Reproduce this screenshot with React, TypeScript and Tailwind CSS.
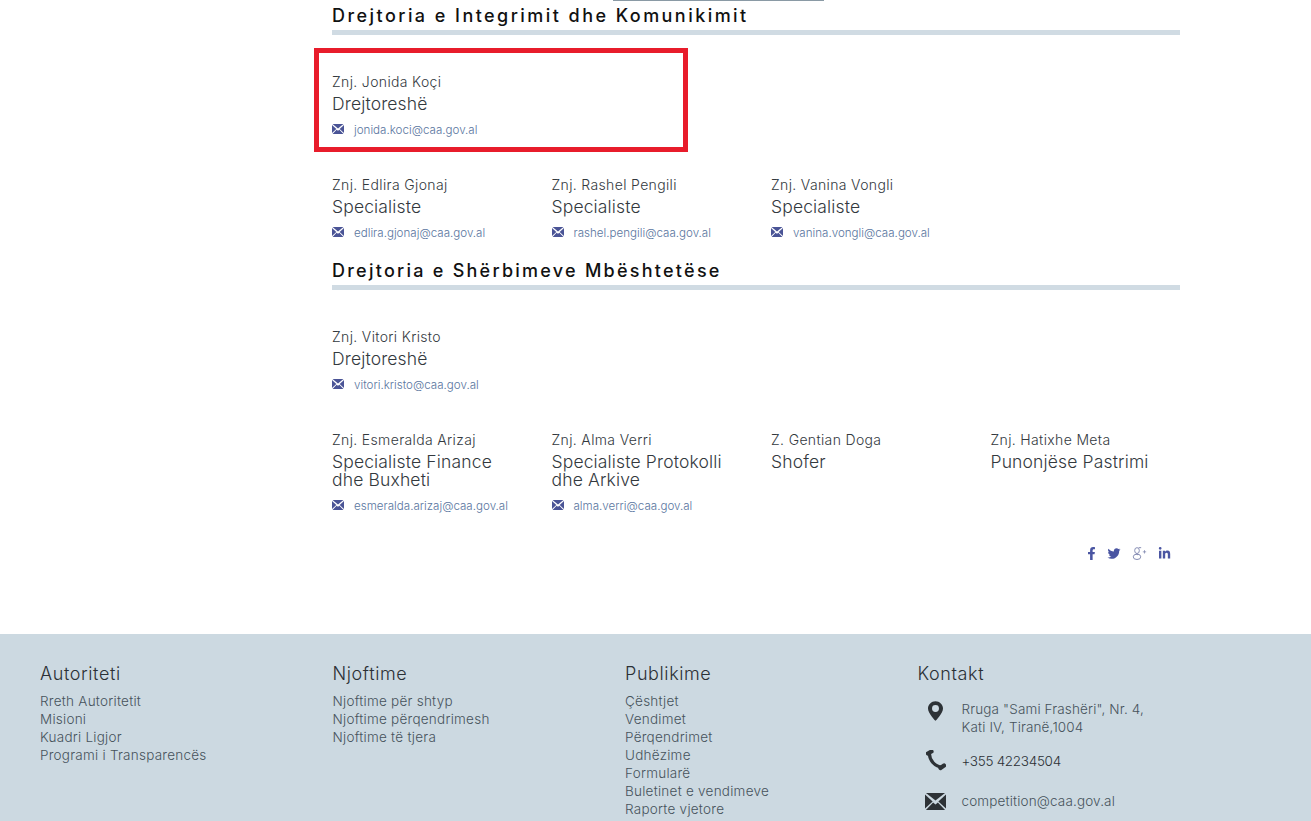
import { FaFacebookF, FaTwitter, FaLinkedinIn } from "react-icons/fa";

type Person = { name: string; role: string[]; email?: string };

function Envelope({ className }: { className: string }) {
  return (
    <svg viewBox="0 0 22 16" preserveAspectRatio="none" className={className} fill="currentColor">
      <path d="M1 0h20L11 7z" />
      <path d="M0 1.500v13L8 8z" />
      <path d="M22 1.500v13L14 8z" />
      <path d="M1 16h20L13.500 9 11 10.800 8.500 9z" />
    </svg>
  );
}

function Pin() {
  return (
    <svg viewBox="0 0 16 21" className="h-[20px] w-[15px] text-[#2d3236]" fill="currentColor">
      <path
        fillRule="evenodd"
        d="M8 0C3.600 0 0 3.500 0 7.800 0 13 8 21 8 21s8-8 8-13.200C16 3.500 12.400 0 8 0zm0 11.500a3.700 3.700 0 1 1 0-7.400 3.700 3.700 0 0 1 0 7.400z"
      />
    </svg>
  );
}

function Phone() {
  return (
    <svg viewBox="0 0 20 21" className="h-[21px] w-[20px] text-[#2d3236]" fill="none" stroke="currentColor">
      <path d="M3.500 4C3.500 10 9 17 16 17" strokeWidth="3.200" />
      <path d="M1.800 3.500L5.500 1.500" strokeWidth="4.200" strokeLinecap="round" />
      <path d="M14.500 18L18 15.500" strokeWidth="4.200" strokeLinecap="round" />
    </svg>
  );
}

function GooglePlus() {
  return (
    <svg viewBox="0 0 18 16" className="h-[15px] w-[15px] text-[#7c83ad]" fill="none" stroke="currentColor" strokeWidth="1.100">
      <ellipse cx="6" cy="4.500" rx="2.800" ry="3.500" />
      <ellipse cx="6" cy="12" rx="4.500" ry="3.200" />
      <path d="M6 8c-1.500 1 1.500 1.500 1 1.500M8 1h3" />
      <path d="M13 6h4M15 4v4" strokeWidth="0.900" />
    </svg>
  );
}

function PersonCard({ name, role, email }: Person) {
  return (
    <div>
      <p className="text-[14px] font-light leading-[20px] tracking-[0.35px] text-[#33393e]">{name}</p>
      <p className="mt-[3px] text-[17.500px] font-light leading-[18px] tracking-[0.15px] text-[#33393e]">
        {role.map((line) => (
          <span key={line} className="block">
            {line}
          </span>
        ))}
      </p>
      {email && (
        <p className="mt-[9px] flex items-center text-[11.600px] font-light leading-[16px] text-[#5a76a0]">
          <Envelope className="h-[10px] w-[12px] -translate-y-px text-[#4a5496]" />
          <span className="ml-[10px]">{email}</span>
        </p>
      )}
    </div>
  );
}

function Heading({ children, tracking }: { children: string; tracking: string }) {
  return (
    <div>
      <h2 className={`text-[18px] font-medium leading-[24px] text-[#111] ${tracking}`}>{children}</h2>
      <div className="mt-[2px] h-[5px] bg-[#d0dbe3]" />
    </div>
  );
}

function FooterColumn({ title, links }: { title: string; links: string[] }) {
  return (
    <div>
      <h3 className="text-[18px] font-light leading-[24px] tracking-[0.6px] text-[#2b3035]">{title}</h3>
      <ul className="mt-[6px]">
        {links.map((l) => (
          <li key={l} className="text-[13.500px] font-light leading-[18px] tracking-[0.25px] text-[#47535c]">
            {l}
          </li>
        ))}
      </ul>
    </div>
  );
}

export default function App() {
  return (
    <div className="relative h-[821px] overflow-hidden bg-white font-['Inter',sans-serif]">
      <div className="ml-[613px] h-px w-[211px] bg-[#8a9aa5]" />

      <main className="ml-[332px] h-[633px] w-[848px] pt-[3px]">
        <Heading tracking="tracking-[2.450px]">Drejtoria e Integrimit dhe Komunikimit</Heading>
        <div className="pt-[37px] pb-[18px]">
          <div className="h-[103px]">
            <PersonCard name="Znj. Jonida Koçi" role={["Drejtoreshë"]} email="jonida.koci@caa.gov.al" />
          </div>
          <div className="grid w-[878px] grid-cols-4">
            <PersonCard name="Znj. Edlira Gjonaj" role={["Specialiste"]} email="edlira.gjonaj@caa.gov.al" />
            <PersonCard name="Znj. Rashel Pengili" role={["Specialiste"]} email="rashel.pengili@caa.gov.al" />
            <PersonCard name="Znj. Vanina Vongli" role={["Specialiste"]} email="vanina.vongli@caa.gov.al" />
          </div>
        </div>
        <Heading tracking="tracking-[2.250px]">Drejtoria e Shërbimeve Mbështetëse</Heading>
        <div className="pt-[37px]">
          <div className="h-[103px]">
            <PersonCard name="Znj. Vitori Kristo" role={["Drejtoreshë"]} email="vitori.kristo@caa.gov.al" />
          </div>
          <div className="grid w-[878px] grid-cols-4">
            <PersonCard name="Znj. Esmeralda Arizaj" role={["Specialiste Finance", "dhe Buxheti"]} email="esmeralda.arizaj@caa.gov.al" />
            <PersonCard name="Znj. Alma Verri" role={["Specialiste Protokolli", "dhe Arkive"]} email="alma.verri@caa.gov.al" />
            <PersonCard name="Z. Gentian Doga" role={["Shofer"]} />
            <PersonCard name="Znj. Hatixhe Meta" role={["Punonjëse Pastrimi"]} />
          </div>
          <div className="mt-[32px] flex items-center justify-end gap-[11px] pr-[9px] text-[#4a55a2]">
            <FaFacebookF className="h-[13px] w-[9px]" />
            <FaTwitter className="h-[13px] w-[14px]" />
            <GooglePlus />
            <FaLinkedinIn className="h-[13px] w-[13px]" />
          </div>
        </div>
      </main>

      <footer className="h-[187px] overflow-hidden bg-[#ccd9e1] pl-[40px] pt-[28px]">
        <div className="grid w-[1170px] grid-cols-4">
          <FooterColumn title="Autoriteti" links={["Rreth Autoritetit", "Misioni", "Kuadri Ligjor", "Programi i Transparencës"]} />
          <FooterColumn title="Njoftime" links={["Njoftime për shtyp", "Njoftime përqendrimesh", "Njoftime të tjera"]} />
          <FooterColumn title="Publikime" links={["Çështjet", "Vendimet", "Përqendrimet", "Udhëzime", "Formularë", "Buletinet e vendimeve", "Raporte vjetore"]} />
          <div>
            <h3 className="text-[18px] font-light leading-[24px] tracking-[0.6px] text-[#2b3035]">Kontakt</h3>
            <div className="mt-[14px] flex flex-col text-[13.500px] font-light leading-[18px] tracking-[0.15px]">
              <div className="flex">
                <div className="flex w-[36px] justify-center pt-[1px]">
                  <Pin />
                </div>
                <p className="ml-[8px] text-[#47535c]">
                  Rruga "Sami Frashëri", Nr. 4,
                  <br />
                  Kati IV, Tiranë,1004
                </p>
              </div>
              <div className="mt-[14px] flex items-center">
                <div className="flex w-[36px] justify-center">
                  <Phone />
                </div>
                <p className="ml-[8px] tracking-[-0.3px] text-[#2b3035]">+355 42234504</p>
              </div>
              <div className="mt-[21px] flex items-center">
                <div className="flex w-[36px] justify-center">
                  <Envelope className="h-[17px] w-[21px] text-[#2d3236]" />
                </div>
                <p className="ml-[8px] text-[#47535c]">competition@caa.gov.al</p>
              </div>
            </div>
          </div>
        </div>
      </footer>

      {/* annotation drawn over the page */}
      <div className="absolute left-[314px] top-[48px] h-[104px] w-[374px] border-[5px] border-[#e81c2b]" />
    </div>
  );
}
